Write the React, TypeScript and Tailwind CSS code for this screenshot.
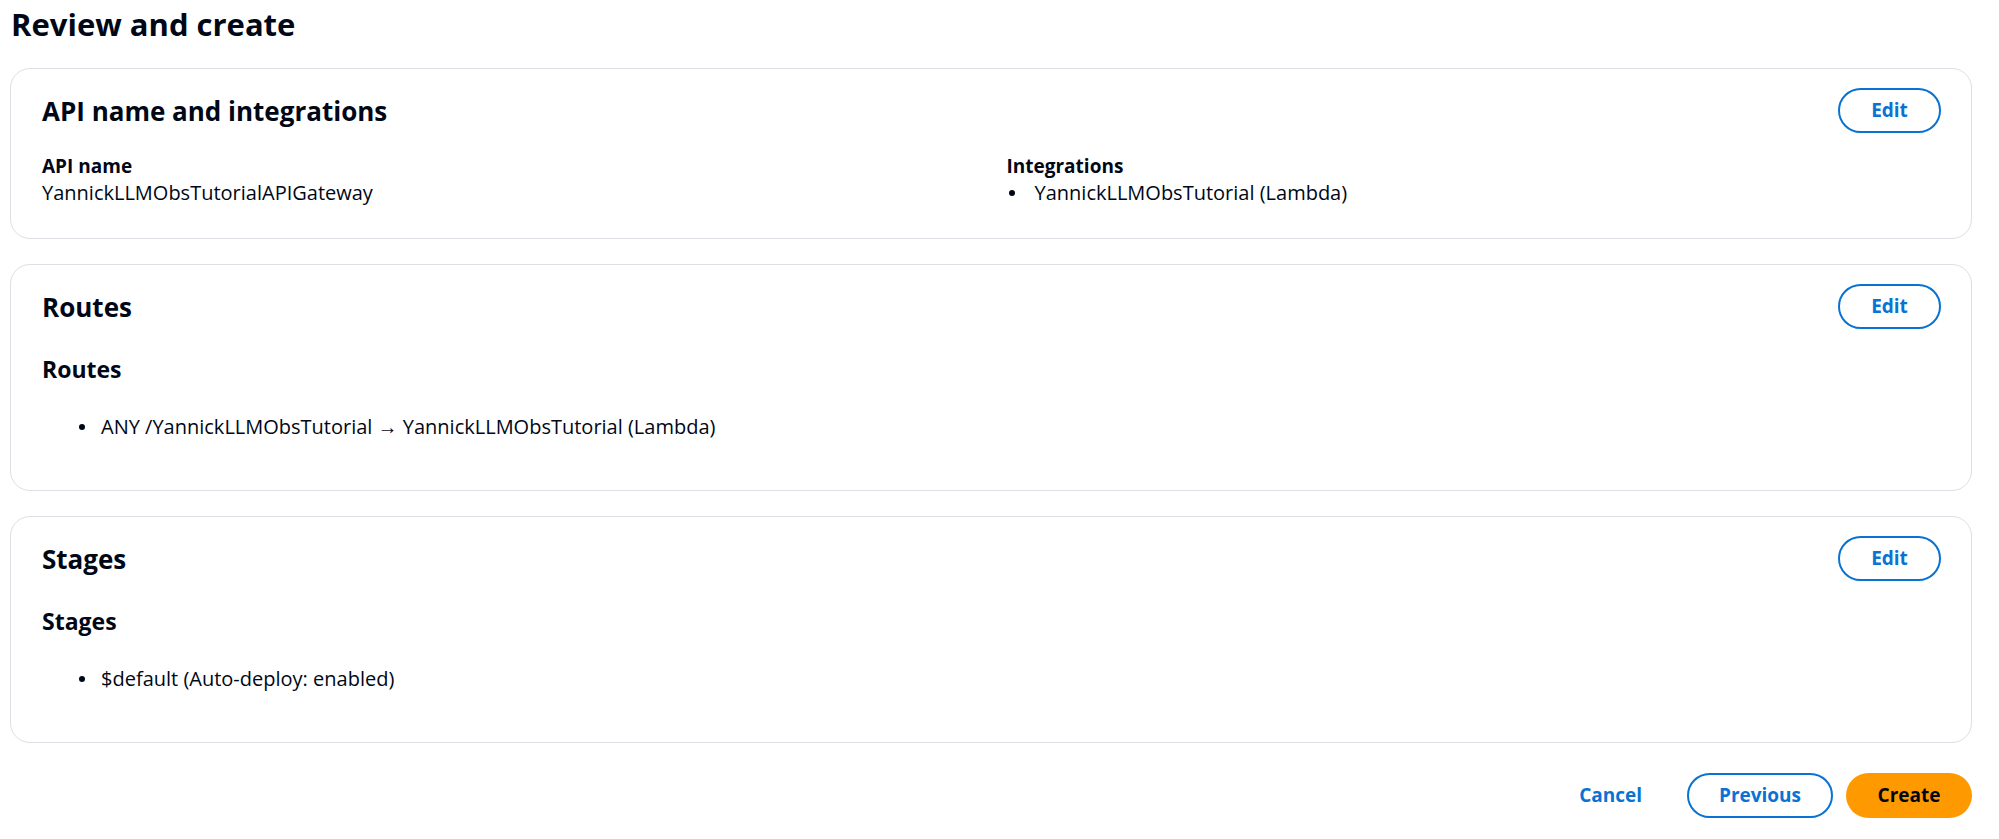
import React from 'react';

interface CardProps {
  title: string;
  children: React.ReactNode;
}

const EditButton = () => (
  <button className="h-[45px] w-[103px] rounded-full border-2 border-[#0972d3] text-[19px] font-bold text-[#0972d3] bg-white">
    Edit
  </button>
);

const Bullet = ({ children }: { children: React.ReactNode }) => (
  <li className="flex items-center gap-[16px] leading-[28px]">
    <span className="w-[6px] h-[6px] rounded-full bg-[#000716] shrink-0"></span>
    <span>{children}</span>
  </li>
);

const Card: React.FC<CardProps> = ({ title, children }) => {
  return (
    <section className="rounded-[20px] border border-[#dcdfe3] bg-white pl-[31px] pr-[30px] pt-[19px]">
      {/* Header row */}
      <div className="flex items-center justify-between h-[45px]">
        <h2 className="text-[26px] font-bold leading-[32px]">{title}</h2>
        <EditButton />
      </div>
      {children}
    </section>
  );
};

const ListSection = ({ heading, item }: { heading: string; item: string }) => (
  <div className="pb-[49px]">
    <h3 className="mt-[25px] text-[23px] font-bold leading-[30px]">{heading}</h3>
    <ul className="mt-[29px] pl-[37px] text-[20px]">
      <Bullet>{item}</Bullet>
    </ul>
  </div>
);

export default function App() {
  return (
    <div
      className="min-h-screen w-full bg-white text-[#000716] pl-[10px] pr-[27px] pt-[6px]"
      style={{ fontFamily: '"Open Sans", "Liberation Sans", sans-serif' }}
    >
      <h1 className="text-[31px] font-bold leading-[36px] pl-[1px]">Review and create</h1>

      <div className="mt-[26px] flex flex-col gap-[25px]">
        <Card title="API name and integrations">
          <div className="grid grid-cols-2 gap-[30px] mt-[20px] pb-[31px]">
            <div>
              <div className="text-[19px] font-bold leading-[26px]">API name</div>
              <div className="text-[20px] leading-[28px]">YannickLLMObsTutorialAPIGateway</div>
            </div>
            <div>
              <div className="text-[19px] font-bold leading-[26px]">Integrations</div>
              <ul className="pl-[2px] text-[20px]">
                <li className="flex items-center gap-[20px] leading-[28px]">
                  <span className="w-[6px] h-[6px] rounded-full bg-[#000716] shrink-0"></span>
                  <span>YannickLLMObsTutorial (Lambda)</span>
                </li>
              </ul>
            </div>
          </div>
        </Card>

        <Card title="Routes">
          <ListSection heading="Routes" item="ANY /YannickLLMObsTutorial → YannickLLMObsTutorial (Lambda)" />
        </Card>

        <Card title="Stages">
          <ListSection heading="Stages" item="$default (Auto-deploy: enabled)" />
        </Card>
      </div>

      {/* Footer actions */}
      <div className="mt-[30px] flex items-center justify-end">
        <button className="h-[45px] px-[20px] text-[19px] font-bold text-[#0972d3]">Cancel</button>
        <button className="ml-[25px] h-[45px] w-[146px] rounded-full border-2 border-[#0972d3] text-[19px] font-bold text-[#0972d3] bg-white">
          Previous
        </button>
        <button className="ml-[13px] h-[45px] w-[126px] rounded-full bg-[#ff9900] text-[19px] font-bold text-[#000716]">
          Create
        </button>
      </div>
    </div>
  );
}
